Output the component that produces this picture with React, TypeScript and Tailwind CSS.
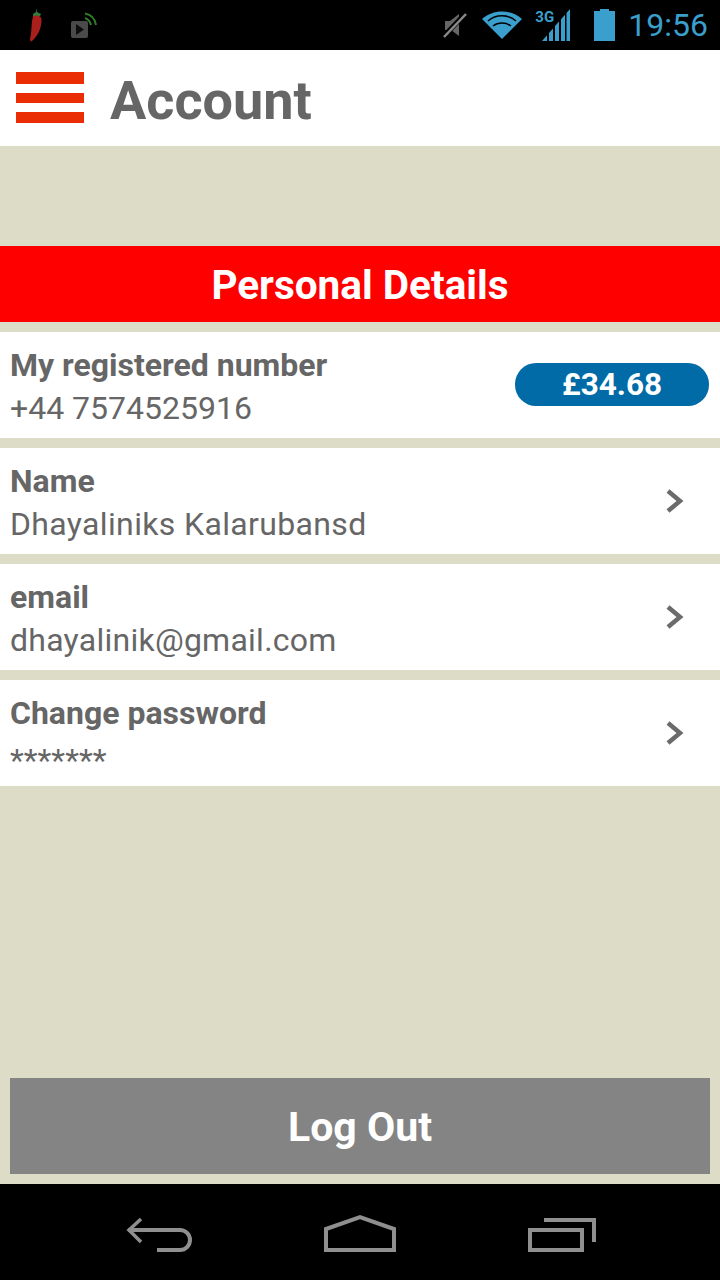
import React from 'react';

const font = { fontFamily: 'Roboto, "Noto Sans", sans-serif' };

const Chevron = () => (
  <svg width="20" height="26" viewBox="0 0 20 26" className="mr-[35px] shrink-0">
    <path d="M3 3 L15 13 L3 23" fill="none" stroke="#6b6b6b" strokeWidth="4.500" />
  </svg>
);

const StatusBar = () => (
  <div className="flex h-[50px] items-center bg-black">
    {/* chilli */}
    <svg width="20" height="36" viewBox="0 0 20 36" className="ml-[26px]">
      <path d="M10 1 L11 5 L15 7 L14 9 L7 9 L7 7 L10 5Z" fill="#2f7d3c" />
      <path d="M7 9 C10 8 15 8 15.500 12 C16 20 12 29 6 34 C5 35 4 34 4 32 C6 24 5 16 7 9Z" fill="#a81f1b" />
    </svg>
    {/* cast icon */}
    <svg width="28" height="30" viewBox="0 0 28 30" className="ml-[24px] mt-[4px]">
      <rect x="1" y="9" width="17" height="17" rx="2" fill="#4a4a4a" />
      <path d="M6 12 L14 17.500 L6 23Z" fill="#0c0c0c" />
      <path d="M15 1.500 C21 2.500 25 7 26 13" fill="none" stroke="#2f7a2a" strokeWidth="2" />
      <path d="M15 6 C18 7 20 9 21 13" fill="none" stroke="#2f7a2a" strokeWidth="2" />
    </svg>
    <div className="flex-1" />
    {/* muted speaker */}
    <svg width="26" height="26" viewBox="0 0 26 26" className="mr-[14px]">
      <path d="M3 9 L8 9 L17 2 L17 24 L9 18 L3 18Z" fill="#666666" />
      <path d="M1 25 L24 1" stroke="#000" strokeWidth="5" />
      <path d="M2 25 L24 2" stroke="#8a8a8a" strokeWidth="2.500" />
    </svg>
    {/* wifi */}
    <svg width="40" height="30" viewBox="0 0 40 30" className="mr-[13px]">
      <path d="M20 29 L0 9 C11 -1 29 -1 40 9Z" fill="#3a9fcc" />
      <path d="M6 11 C14 4 26 4 34 11 M11 16 C16 12 24 12 29 16" fill="none" stroke="#000" strokeWidth="1.500" />
    </svg>
    {/* signal */}
    <div className="relative mr-[24px] h-[32px] w-[35px]">
      <span className="absolute left-0 top-[1px] text-[15px] font-bold leading-none text-[#3a9fcc]" style={font}>
        3G
      </span>
      <svg width="35" height="32" viewBox="0 0 35 32" className="absolute inset-0">
        <path d="M7 32 L12 26.300 V32Z M14 32 V24 L18 19.400 V32Z M20 32 V17.100 L24 12.600 V32Z M26 32 V10.300 L30 5.700 V32Z M31.500 32 V4 L35 0 V32Z" fill="#3a9fcc" />
      </svg>
    </div>
    {/* battery */}
    <svg width="21" height="32" viewBox="0 0 21 32" className="mr-[13px]">
      <path d="M6 0 H15 V2 H21 V32 H0 V2 H6Z" fill="#3a9fcc" />
    </svg>
    <span className="mr-[12px] text-[32px] leading-none text-[#3a9fcc]" style={font}>
      19:56
    </span>
  </div>
);

const Row = ({
  title,
  value,
  end,
  valueClass = 'pt-[1px]',
}: {
  title: string;
  value: string;
  end: React.ReactNode;
  valueClass?: string;
}) => (
  <div className="flex h-[106px] items-center justify-between bg-white">
    <div className="pl-[10px] pt-[3px] text-[#666666]">
      <div className="text-[32px] font-bold leading-[42px]">{title}</div>
      <div className={`text-[32px] leading-[43px] ${valueClass}`}>{value}</div>
    </div>
    {end}
  </div>
);

const NavBar = () => (
  <div className="flex h-[96px] items-center justify-center bg-black">
    <svg width="520" height="80" viewBox="0 0 520 80" fill="none" stroke="#8f8f8f" strokeWidth="4">
      <path d="M41 27 L29 38 L41 50" strokeWidth="3.500" />
      <path d="M28 38 H80 A10 10 0 0 1 80 58 H57" />
      <path d="M226 58 V37 L260 25 L294 37 V58Z" />
      <path d="M430 38 H482 V58 H430Z" />
      <path d="M444 28 H494 V50" />
    </svg>
  </div>
);

export default function App() {
  return (
    <div className="flex h-[1280px] w-[720px] flex-col bg-[#dddcc7]" style={font}>
      <StatusBar />

      <div className="flex h-[96px] items-center bg-white">
        <div className="ml-[16px] mt-[-1px] flex w-[68px] flex-col gap-[9px]">
          <div className="h-[12px] bg-[#ea2d05]" />
          <div className="h-[10px] bg-[#ea2d05]" />
          <div className="h-[11px] bg-[#ea2d05]" />
        </div>
        <h1 className="ml-[26px] pt-[6px] text-[54px] font-bold leading-none text-[#666666]">Account</h1>
      </div>

      <div className="mt-[100px] flex h-[76px] items-center justify-center bg-[#ff0000] pt-[3px] text-[40.5px] font-bold text-white">
        Personal Details
      </div>

      <div className="mt-[10px] flex flex-col gap-[10px]">
        <Row
          title="My registered number"
          value="+44 7574525916"
          end={
            <div className="mb-[1px] mr-[11px] flex h-[43px] w-[194px] items-center justify-center rounded-[21px] bg-[#006ba6] text-[31.5px] font-bold text-white">
              £34.68
            </div>
          }
        />
        <Row title="Name" value="Dhayaliniks Kalarubansd" valueClass="pt-[1px] tracking-[0.35px]" end={<Chevron />} />
        <Row title="email" value="dhayalinik@gmail.com" valueClass="pt-[1px] tracking-[0.25px]" end={<Chevron />} />
        <Row title="Change password" value="*******" valueClass="mb-[-4px] pt-[5px]" end={<Chevron />} />
      </div>

      <div className="flex-1" />

      <div className="mx-[10px] mb-[10px] flex h-[96px] items-center justify-center bg-[#848484] pt-[3px] text-[41px] font-bold text-white">
        Log Out
      </div>

      <NavBar />
    </div>
  );
}
